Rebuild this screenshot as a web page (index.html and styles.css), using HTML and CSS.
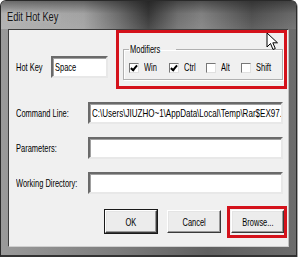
FILE: index.html
```html
<!DOCTYPE html>
<html lang="en">
<head>
  <meta charset="UTF-8" />
  <title>Edit Hot Key</title>
  <link rel="stylesheet" href="styles.css">
</head>
<body>

  <div class="window">
    <div class="titlebar"><span class="t">Edit Hot Key</span></div>

    <div class="client">
      <div class="top-row">
        <span class="label hk-label"><span class="t">Hot Key</span></span>
        <div class="input hk-input"><span class="t">Space</span></div>

        <!-- highlighted group -->
        <div class="mark mark-group">
          <fieldset class="group">
            <legend><span class="t">Modifiers</span></legend>
            <div class="checks">
              <label class="check"><span class="box on"></span><span class="t">Win</span></label>
              <label class="check"><span class="box on"></span><span class="t">Ctrl</span></label>
              <label class="check"><span class="box"></span><span class="t">Alt</span></label>
              <label class="check"><span class="box"></span><span class="t">Shift</span></label>
            </div>
          </fieldset>
        </div>
      </div>

      <div class="fields">
        <div class="field">
          <span class="label"><span class="t">Command Line:</span></span>
          <div class="input"><span class="t path">C:\Users\JIUZHO~1\AppData\Local\Temp\Rar$EX97.\</span></div>
        </div>
        <div class="field">
          <span class="label"><span class="t">Parameters:</span></span>
          <div class="input"></div>
        </div>
        <div class="field">
          <span class="label"><span class="t">Working Directory:</span></span>
          <div class="input"></div>
        </div>
      </div>

      <div class="buttons">
        <button class="btn default"><span class="t">OK</span></button>
        <button class="btn cancel"><span class="t">Cancel</span></button>
        <div class="mark mark-btn">
          <button class="btn"><span class="t">Browse...</span></button>
        </div>
      </div>
    </div>

    <svg class="cursor" width="13" height="20" viewBox="0 0 13 20">
      <path d="M1 1 L1 15 L4.5 11.5 L7 17.5 L9.3 16.5 L6.8 10.8 L11.5 10.8 Z" fill="#fff" stroke="#000" stroke-width="1" stroke-linejoin="round"/>
    </svg>
  </div>

</body>
</html>
```

FILE: styles.css
```css
body {
  margin: 0;
  background: #fff;
  font-family: "Liberation Sans", Arial, sans-serif;
  font-size: 11px;
  color: #000;
}

/* the screenshot's text is squeezed sideways */
.t {
  display: inline-block;
  white-space: nowrap;
  transform: scaleX(0.68);
  transform-origin: 0 50%;
}

.window {
  position: relative;
  width: 297px;
  height: 257px;
  box-sizing: border-box;
  padding: 0 7px 8px 7px;
  background: linear-gradient(to right, #9a9a9a, #7c7c7c 40%, #606060 70%, #6c6c6c);
  border: 1px solid #2a2a2a;
  border-bottom: 2px solid #333;
  border-radius: 6px 6px 0 0;
  box-shadow: 1px 1px 0 #a8a8a8;
  display: flex;
  flex-direction: column;
}

.titlebar {
  flex: none;
  height: 28px;
  line-height: 31px;
  font-size: 13px;
  color: #161616;
  text-shadow: 0 0 5px #d0d0d0;
  background:
    linear-gradient(to bottom, rgba(20,20,20,0.45), rgba(20,20,20,0) 45%, rgba(200,200,200,0.15)),
    linear-gradient(to right, #b0b0b0, #a2a2a2 28%, #6a6a6a 40%, #363636 50%, #6e6e6e 60%, #808080 68%, #4e4e4e 85%, #6a6a6a);
  margin: 0 -7px;
  padding-left: 6px;
  border-radius: 5px 5px 0 0;
}

.titlebar .t {
  transform: scaleX(0.71);
}

/* Dialog body */
.client {
  flex: 1;
  background: #f0f0f0;
  border: 1px solid #3c3c3c;
  border-right-color: #c0c0c0;
  border-bottom-color: #d0d0d0;
  display: flex;
  flex-direction: column;
  padding: 0 1px 0 7px;
}

.top-row {
  display: flex;
  align-items: flex-start;
  height: 59px;
}

.label {
  width: 72px;
  flex: none;
}

.hk-label {
  width: 35px;
  margin-top: 31px;
}

.input {
  height: 22px;
  box-sizing: border-box;
  background: #fff;
  border: 2px solid;
  border-color: #6a6a6a #e8e8e8 #e8e8e8 #6a6a6a;
  box-shadow: inset 1px 1px 0 #a0a0a0;
  padding: 3px 0 0 2px;
  white-space: nowrap;
  overflow: hidden;
  flex: 1;
}

.path {
  transform: scaleX(0.73);
}

.hk-input {
  flex: none;
  width: 57px;
  margin-top: 26px;
}

/* Red highlight rectangles */
.mark {
  border: 3px solid #d4121b;
  box-sizing: border-box;
}

.mark-group {
  margin-left: 8px;
  width: 172px;
  height: 59px;
  padding: 0 1px 0 4px;
}

.group {
  margin: 10px 0 0 0;
  padding: 5px 0 5px 5px;
  border: 1px solid #b0b0b0;
  box-shadow: 1px 1px 0 #fff, inset 1px 1px 0 #fff;
}

.group legend {
  padding: 0 1px;
  margin-left: 0;
  line-height: 13px;
}

.checks {
  display: grid;
  grid-template-columns: 40px 37px 35px auto;
  line-height: 13px;
}

.check {
  display: flex;
  align-items: center;
}

.box {
  flex: none;
  width: 8px;
  height: 8px;
  margin-right: 5px;
  background: #fff;
  border: 1px solid;
  border-color: #777 #e0e0e0 #e0e0e0 #777;
  position: relative;
}

.box.on::after {
  content: "";
  position: absolute;
  left: 2px;
  top: 0;
  width: 2px;
  height: 5px;
  border: solid #000;
  border-width: 0 2px 2px 0;
  transform: rotate(40deg);
}

.fields {
  display: flex;
  flex-direction: column;
  gap: 13px;
  margin-top: 13px;
  padding-right: 4px;
}

.field {
  display: flex;
  align-items: center;
}

.buttons {
  display: flex;
  justify-content: flex-end;
  align-items: flex-start;
  margin-top: 12px;
}

.btn {
  font: inherit;
  font-size: 11px;
  color: #000;
  height: 23px;
  width: 53px;
  padding: 0;
  margin-top: 4px;
  background: #ececec;
  border: 1px solid;
  border-color: #fff #3a3a3a #3a3a3a #fff;
  box-shadow: inset -1px -1px 0 #9a9a9a, inset 1px 1px 0 #e4e4e4;
}

.btn .t {
  transform-origin: 50% 50%;
}

.btn.default {
  width: 52px;
  outline: 1px solid #1a1a1a;
  margin-right: 10px;
}

.btn.cancel {
  width: 54px;
  margin-right: 6px;
}

.mark-btn {
  padding: 1px 0 2px 1px;
}

.mark-btn .btn {
  margin-top: 0;
}

.cursor {
  position: absolute;
  left: 265px;
  top: 31px;
}
```
